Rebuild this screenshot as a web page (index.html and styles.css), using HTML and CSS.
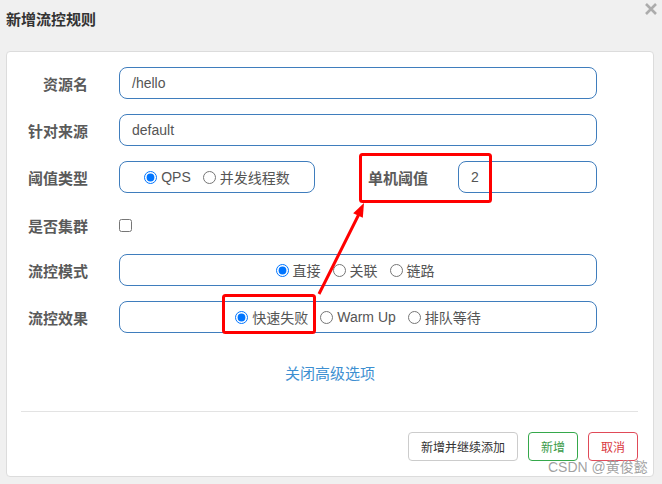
FILE: index.html
```html
<!DOCTYPE html>
<html lang="zh-CN">
<head>
<meta charset="utf-8">
<title>新增流控规则</title>
<link rel="stylesheet" href="styles.css">
</head>
<body>
<div class="page">
  <div class="modal-header">
    <h4 class="title">新增流控规则</h4>
    <span class="close" aria-label="关闭">
      <svg width="12" height="12" viewBox="0 0 12 12"><path d="M1 1 L11 11 M11 1 L1 11" stroke="#acacac" stroke-width="2.6" fill="none"/></svg>
    </span>
  </div>

  <div class="card">
    <div class="row">
      <label class="lbl">资源名</label>
      <div class="input wide">/hello</div>
    </div>
    <div class="row">
      <label class="lbl">针对来源</label>
      <div class="input wide">default</div>
    </div>
    <div class="row">
      <label class="lbl">阈值类型</label>
      <div class="radio-box narrow">
        <label class="opt"><input type="radio" name="grade" checked>QPS</label>
        <label class="opt"><input type="radio" name="grade">并发线程数</label>
      </div>
      <label class="lbl lbl-mid">单机阈值</label>
      <div class="input small">2</div>
    </div>
    <div class="row row-check">
      <label class="lbl">是否集群</label>
      <input type="checkbox" class="check">
    </div>
    <div class="row">
      <label class="lbl">流控模式</label>
      <div class="radio-box wide mode">
        <label class="opt"><input type="radio" name="mode" checked>直接</label>
        <label class="opt"><input type="radio" name="mode">关联</label>
        <label class="opt"><input type="radio" name="mode">链路</label>
      </div>
    </div>
    <div class="row">
      <label class="lbl">流控效果</label>
      <div class="radio-box wide">
        <label class="opt"><input type="radio" name="effect" checked>快速失败</label>
        <label class="opt"><input type="radio" name="effect">Warm Up</label>
        <label class="opt"><input type="radio" name="effect">排队等待</label>
      </div>
    </div>
    <div class="link-row"><a class="adv-link">关闭高级选项</a></div>
    <div class="divider"></div>
    <div class="footer">
      <button class="btn btn-default">新增并继续添加</button>
      <button class="btn btn-green">新增</button>
      <button class="btn btn-red">取消</button>
    </div>
  </div>

  <svg class="annot" width="662" height="484" viewBox="0 0 662 484">
    <rect x="360.5" y="154.5" width="130" height="47" rx="2" fill="none" stroke="#ff0000" stroke-width="3"/>
    <rect x="223.5" y="295.5" width="91" height="37" rx="2" fill="none" stroke="#ff0000" stroke-width="3"/>
    <line x1="319" y1="294" x2="358.5" y2="215" stroke="#ff0000" stroke-width="3"/>
    <polygon points="364,203 362.8,217.8 353.2,213.2" fill="#ff0000"/>
  </svg>

  <div class="watermark">CSDN @黄俊懿</div>
</div>
</body>
</html>
```

FILE: styles.css
```css
* {
  box-sizing: border-box;
}

html, body {
  margin: 0;
  padding: 0;
}

body {
  background: #f0f0f0;
  font-family: "Liberation Sans", "Noto Sans CJK SC", sans-serif;
  font-size: 14px;
  color: #555;
}

.page {
  position: relative;
  width: 662px;
  height: 484px;
  overflow: hidden;
}

.modal-header {
  height: 51px;
  display: flex;
  justify-content: space-between;
  align-items: flex-start;
  padding: 0 5px 0 6px;
}

.title {
  margin: 0;
  padding-top: 10px;
  font-size: 15px;
  line-height: 19px;
  font-weight: bold;
  color: #333;
}

.close {
  display: block;
  padding-top: 3px;
  line-height: 0;
}

.card {
  margin-left: 6px;
  width: 648px;
  height: 426px;
  background: #fff;
  border: 1px solid #dcdcdc;
  border-radius: 4px;
  padding: 15px 0 15px 0;
  display: flex;
  flex-direction: column;
}

.row {
  display: flex;
  align-items: center;
  height: 32px;
  margin-bottom: 15px;
}

.row-check {
  height: 31px;
  padding-top: 3px;
}

.lbl {
  width: 81px;
  text-align: right;
  font-size: 15px;
  font-weight: bold;
  color: #5a5a5a;
  margin-right: 31px;
  flex: none;
}

.lbl-mid {
  width: 113px;
  margin-right: 30px;
}

.input {
  height: 32px;
  border: 1px solid #3f7dbd;
  border-radius: 8px;
  padding: 0 12px;
  display: flex;
  align-items: center;
  color: #555;
  font-size: 14px;
  flex: none;
}

.input.wide {
  width: 478px;
}

.input.small {
  width: 139px;
}

.radio-box {
  height: 32px;
  border: 1px solid #3f7dbd;
  border-radius: 8px;
  display: flex;
  align-items: center;
  justify-content: center;
  gap: 12px;
  flex: none;
}

.radio-box.narrow {
  width: 196px;
}

.radio-box.wide {
  width: 478px;
}

.radio-box.mode {
  padding-right: 6px;
}

.opt {
  display: flex;
  align-items: center;
  gap: 4px;
  font-size: 14px;
  color: #555;
}

.opt input {
  margin: 0;
  width: 13px;
  height: 13px;
}

.check {
  margin: 0;
  width: 13px;
  height: 13px;
}

.link-row {
  margin-top: 16px;
  text-align: center;
  height: 20px;
  line-height: 20px;
}

.adv-link {
  color: #3d8fd1;
  font-size: 15px;
  cursor: pointer;
}

.divider {
  margin: 27px 15px 0 14px;
  height: 1px;
  background: #e3e3e3;
}

.footer {
  margin-top: 20px;
  padding-right: 15px;
  display: flex;
  justify-content: flex-end;
  gap: 10px;
}

.btn {
  height: 29px;
  padding: 0 12px;
  font-family: "Liberation Sans", "Noto Sans CJK SC", sans-serif;
  font-size: 12px;
  background: #fff;
  border-radius: 4px;
  border: 1px solid #ccc;
  color: #333;
}

.btn-green {
  border-color: #35a84b;
  color: #3a9a48;
}

.btn-red {
  border-color: #e04a58;
  color: #d9383f;
}

.annot {
  position: absolute;
  left: 0;
  top: 0;
  pointer-events: none;
}

.watermark {
  position: absolute;
  left: 548px;
  top: 457px;
  font-size: 14px;
  line-height: 20px;
  color: rgba(130, 130, 130, 0.75);
  text-shadow: 0 0 1px rgba(255, 255, 255, 0.8);
  pointer-events: none;
}
```
